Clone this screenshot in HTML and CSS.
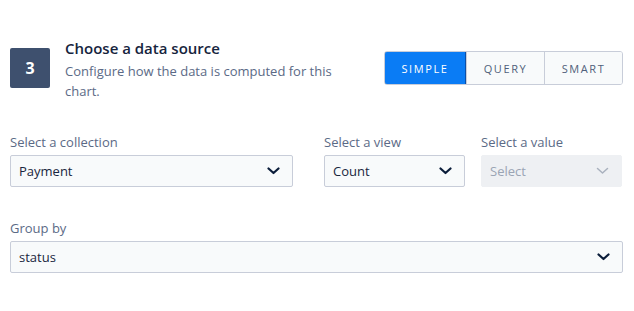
FILE: index.html
```html
<!DOCTYPE html>
<html lang="en">
<head>
    <meta charset="UTF-8">
    <meta name="viewport" content="width=device-width, initial-scale=1.0">
    <title>Data source</title>
    <link rel="stylesheet" href="styles.css">
</head>
<body>

    <div class="step">
        <div class="step-head">
            <div class="step-num">3</div>
            <div class="step-text">
                <h3>Choose a data source</h3>
                <p>Configure how the data is computed for this chart.</p>
            </div>
            <div class="mode-switch">
                <button type="button" class="mode active">SIMPLE</button>
                <button type="button" class="mode">QUERY</button>
                <button type="button" class="mode">SMART</button>
            </div>
        </div>

        <div class="row">
            <div class="field wide">
                <label>Select a collection</label>
                <div class="select">
                    <span>Payment</span>
                    <svg class="chev" width="13" height="8" viewBox="0 0 13 8"><path d="M1.5 1.5 L6.5 6 L11.5 1.5" fill="none" stroke="currentColor" stroke-width="2.2" stroke-linecap="round" stroke-linejoin="round"/></svg>
                </div>
            </div>
            <div class="field narrow">
                <label>Select a view</label>
                <div class="select">
                    <span>Count</span>
                    <svg class="chev" width="13" height="8" viewBox="0 0 13 8"><path d="M1.5 1.5 L6.5 6 L11.5 1.5" fill="none" stroke="currentColor" stroke-width="2.2" stroke-linecap="round" stroke-linejoin="round"/></svg>
                </div>
            </div>
            <div class="field narrow">
                <label>Select a value</label>
                <div class="select disabled">
                    <span>Select</span>
                    <svg class="chev" width="13" height="8" viewBox="0 0 13 8"><path d="M1.5 1.5 L6.5 6 L11.5 1.5" fill="none" stroke="currentColor" stroke-width="1.5" stroke-linecap="round" stroke-linejoin="round"/></svg>
                </div>
            </div>
        </div>

        <div class="field group">
            <label>Group by</label>
            <div class="select">
                <span>status</span>
                <svg class="chev" width="13" height="8" viewBox="0 0 13 8"><path d="M1.5 1.5 L6.5 6 L11.5 1.5" fill="none" stroke="currentColor" stroke-width="2.2" stroke-linecap="round" stroke-linejoin="round"/></svg>
            </div>
        </div>
    </div>

</body>
</html>
```

FILE: styles.css
```css
body {
    margin: 0;
    font-family: "Open Sans", Arial, sans-serif;
    background-color: #fff;
    color: #1b2a42;
}

.step {
    padding: 38px 11px 0 10px;
}

.step-head {
    display: flex;
    align-items: flex-start;
}

.step-num {
    width: 40px;
    height: 40px;
    margin-top: 10px;
    border-radius: 2px;
    background-color: #3e506e;
    color: #fff;
    font-size: 16px;
    font-weight: 700;
    display: flex;
    align-items: center;
    justify-content: center;
}

.step-text {
    margin-left: 15px;
    width: 280px;
}

.step-text h3 {
    margin: 0;
    font-size: 15px;
    font-weight: 600;
    line-height: 20px;
    color: #16243d;
}

.step-text p {
    margin: 3px 0 0;
    font-size: 13px;
    line-height: 20px;
    color: #5b6a86;
}

.mode-switch {
    margin-left: auto;
    margin-top: 13px;
    display: flex;
    border: 1px solid #c8cdd9;
    border-radius: 3px;
    overflow: hidden;
}

.mode {
    height: 32px;
    padding: 0;
    border: none;
    border-left: 1px solid #c8cdd9;
    background-color: #f8fafb;
    color: #505f7a;
    font-family: inherit;
    font-size: 11px;
    letter-spacing: 1.6px;
    width: 78px;
}

.mode:first-child {
    border-left: none;
}

.mode.active {
    width: 82px;
    background-color: #0a7cf5;
    color: #fff;
    border: 1px solid #0a4fa8;
    margin: -1px 0 -1px -1px;
    height: 34px;
    border-radius: 3px 0 0 3px;
}

.row {
    display: flex;
    gap: 16px;
    margin-top: 33px;
}

.field {
    display: flex;
    flex-direction: column;
}

.field.wide {
    width: 283px;
    margin-right: 15px;
}

.field.narrow {
    width: 141px;
}

.field label {
    font-size: 13px;
    color: #5b6a86;
    line-height: 16px;
    margin-bottom: 5px;
}

.field.group {
    margin-top: 33px;
}

.select {
    height: 30px;
    border: 1px solid #c8cdd9;
    border-radius: 2px;
    background-color: #f8fafb;
    display: flex;
    align-items: center;
    justify-content: space-between;
    padding: 0 12px 0 8px;
    font-size: 13px;
    color: #182640;
}

.select .chev {
    color: #0b1d3a;
}

.select.disabled {
    background-color: #eef0f3;
    border-color: #eef0f3;
    color: #9aa4b4;
}

.select.disabled .chev {
    color: #a9b1be;
}
```
